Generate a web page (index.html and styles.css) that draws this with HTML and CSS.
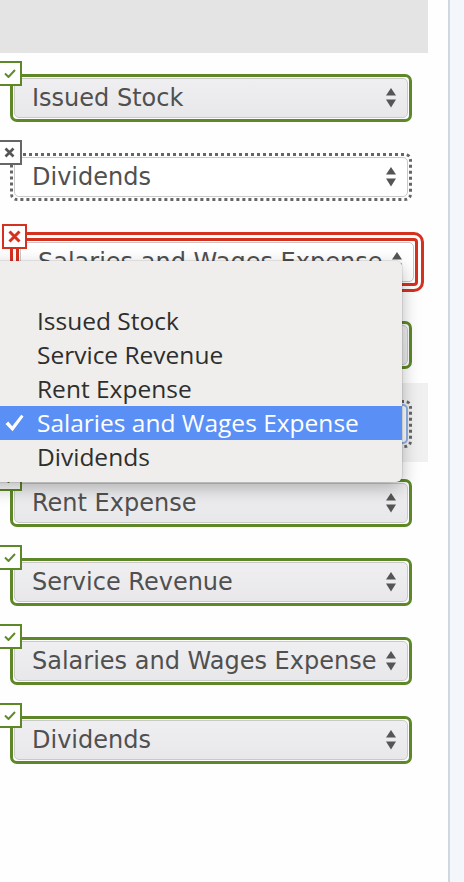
FILE: index.html
```html
<!DOCTYPE html>
<html lang="en">
<head>
<meta charset="utf-8">
<title>Account classification</title>
<link rel="stylesheet" href="styles.css">
</head>
<body>
<div class="app">
  <main class="main">
    <div class="header"></div>
    <div class="rows">
      <div class="row">
        <div class="field ok">
          <span class="badge ok"><svg width="12" height="9" viewBox="0 0 12 9"><path d="M1 4.5 L4.5 8 L11 1" fill="none" stroke="#608a2b" stroke-width="2"/></svg></span>
          <div class="select"><span class="val">Issued Stock</span><svg class="arrows" width="10" height="20" viewBox="0 0 10 20"><polygon points="0,7.5 5,0 10,7.5"/><polygon points="0,11.5 10,11.5 5,19.5"/></svg></div>
        </div>
      </div>
      <div class="row">
        <div class="field muted">
          <span class="badge muted"><svg width="11" height="11" viewBox="0 0 11 11"><path d="M1.5 1.5 L9.5 9.5 M9.5 1.5 L1.5 9.5" fill="none" stroke="#555" stroke-width="2.6"/></svg></span>
          <div class="select"><span class="val">Dividends</span><svg class="arrows" width="10" height="20" viewBox="0 0 10 20"><polygon points="0,7.5 5,0 10,7.5"/><polygon points="0,11.5 10,11.5 5,19.5"/></svg></div>
        </div>
      </div>
      <div class="row">
        <div class="field bad">
          <span class="badge bad"><svg width="13" height="13" viewBox="0 0 13 13"><path d="M1.5 1.5 L11.5 11.5 M11.5 1.5 L1.5 11.5" fill="none" stroke="#d6301f" stroke-width="3"/></svg></span>
          <div class="select"><span class="val">Salaries and Wages Expense</span><svg class="arrows" width="10" height="20" viewBox="0 0 10 20"><polygon points="0,7.5 5,0 10,7.5"/><polygon points="0,11.5 10,11.5 5,19.5"/></svg></div>
        </div>
      </div>
      <div class="row">
        <div class="field ok">
          <span class="badge ok"><svg width="12" height="9" viewBox="0 0 12 9"><path d="M1 4.5 L4.5 8 L11 1" fill="none" stroke="#608a2b" stroke-width="2"/></svg></span>
          <div class="select"><span class="val"></span><svg class="arrows" width="10" height="20" viewBox="0 0 10 20"><polygon points="0,7.5 5,0 10,7.5"/><polygon points="0,11.5 10,11.5 5,19.5"/></svg></div>
        </div>
      </div>
      <div class="row hover">
        <div class="field muted">
          <span class="badge muted"><svg width="11" height="11" viewBox="0 0 11 11"><path d="M1.5 1.5 L9.5 9.5 M9.5 1.5 L1.5 9.5" fill="none" stroke="#555" stroke-width="2.6"/></svg></span>
          <div class="select focus"><span class="val"></span><svg class="arrows" width="10" height="20" viewBox="0 0 10 20"><polygon points="0,7.5 5,0 10,7.5"/><polygon points="0,11.5 10,11.5 5,19.5"/></svg></div>
        </div>
      </div>
      <div class="row">
        <div class="field ok">
          <span class="badge ok"><svg width="12" height="9" viewBox="0 0 12 9"><path d="M1 4.5 L4.5 8 L11 1" fill="none" stroke="#608a2b" stroke-width="2"/></svg></span>
          <div class="select"><span class="val">Rent Expense</span><svg class="arrows" width="10" height="20" viewBox="0 0 10 20"><polygon points="0,7.5 5,0 10,7.5"/><polygon points="0,11.5 10,11.5 5,19.5"/></svg></div>
        </div>
      </div>
      <div class="row">
        <div class="field ok">
          <span class="badge ok"><svg width="12" height="9" viewBox="0 0 12 9"><path d="M1 4.5 L4.5 8 L11 1" fill="none" stroke="#608a2b" stroke-width="2"/></svg></span>
          <div class="select"><span class="val">Service Revenue</span><svg class="arrows" width="10" height="20" viewBox="0 0 10 20"><polygon points="0,7.5 5,0 10,7.5"/><polygon points="0,11.5 10,11.5 5,19.5"/></svg></div>
        </div>
      </div>
      <div class="row">
        <div class="field ok">
          <span class="badge ok"><svg width="12" height="9" viewBox="0 0 12 9"><path d="M1 4.5 L4.5 8 L11 1" fill="none" stroke="#608a2b" stroke-width="2"/></svg></span>
          <div class="select"><span class="val">Salaries and Wages Expense</span><svg class="arrows" width="10" height="20" viewBox="0 0 10 20"><polygon points="0,7.5 5,0 10,7.5"/><polygon points="0,11.5 10,11.5 5,19.5"/></svg></div>
        </div>
      </div>
      <div class="row">
        <div class="field ok">
          <span class="badge ok"><svg width="12" height="9" viewBox="0 0 12 9"><path d="M1 4.5 L4.5 8 L11 1" fill="none" stroke="#608a2b" stroke-width="2"/></svg></span>
          <div class="select"><span class="val">Dividends</span><svg class="arrows" width="10" height="20" viewBox="0 0 10 20"><polygon points="0,7.5 5,0 10,7.5"/><polygon points="0,11.5 10,11.5 5,19.5"/></svg></div>
        </div>
      </div>
    </div>

    <div class="menu">
      <div class="item"><span class="tick"></span><span></span></div>
      <div class="item"><span class="tick"></span><span class="label">Issued Stock</span></div>
      <div class="item"><span class="tick"></span><span class="label">Service Revenue</span></div>
      <div class="item"><span class="tick"></span><span class="label">Rent Expense</span></div>
      <div class="item sel"><span class="tick"><svg width="19" height="18" viewBox="0 0 19 18"><path d="M0.5 10 L3.2 7.6 L7.2 12.2 L16.2 0.8 L18.6 2.6 L7.6 17.2 Z" fill="#fff"/></svg></span><span class="label">Salaries and Wages Expense</span></div>
      <div class="item"><span class="tick"></span><span class="label">Dividends</span></div>
    </div>
  </main>
  <div class="divider"></div>
  <aside class="side"></aside>
</div>
</body>
</html>
```

FILE: styles.css
```css
html, body {
  margin: 0;
  padding: 0;
  background: #fefefe;
}

body {
  font-family: "DejaVu Sans", Verdana, sans-serif;
}

.app {
  display: flex;
  height: 882px;
  overflow: hidden;
}

.main {
  position: relative;
  width: 448px;
  flex: none;
  background: #fefefe;
}

.header {
  width: 428px;
  height: 53px;
  background: #e4e4e4;
}

.rows {
  width: 428px;
  padding-top: 4px;
}

.row {
  padding: 17px 0 14px 10px;
}

.row.hover {
  background: #f0f0f0;
}

.field {
  position: relative;
  display: flex;
  width: max-content;
  padding: 1px;
  border-radius: 7px;
}

.field.ok {
  border: 3px solid #5e8828;
}

.field.muted {
  border: 3px dotted #666;
}

.field.bad {
  border: 9px double #d6301f;
  border-radius: 10px;
  margin-bottom: -2px;
}

.badge {
  position: absolute;
  top: -16px;
  left: -16px;
  width: 21px;
  height: 21px;
  border: 2px solid;
  background: #fff;
  display: flex;
  align-items: center;
  justify-content: center;
  z-index: 1;
}

.field.bad .badge {
  top: -17px;
  left: -17px;
}

.badge.ok {
  border-color: #5e8828;
}

.badge.muted {
  border-color: #666;
}

.badge.bad {
  border-color: #d6301f;
}

.select {
  box-sizing: border-box;
  width: 394px;
  height: 40px;
  display: flex;
  align-items: center;
  padding: 0 11px 0 17px;
  border: 1px solid #c9c9c9;
  border-radius: 5px;
  background: #fff;
  font-size: 24px;
  line-height: 28px;
  color: #505050;
}

.field.ok .select {
  background: linear-gradient(#efeff1, #e8e8ea);
}

.select.focus {
  border: 2px solid #8db2ea;
}

.select .val {
  flex: 1;
  white-space: nowrap;
  overflow: hidden;
}

.arrows {
  flex: none;
  fill: #555;
}

.menu {
  position: absolute;
  left: -30px;
  top: 261px;
  width: 432px;
  box-sizing: border-box;
  padding: 9px 0 8px;
  background: #efeeec;
  border-radius: 6px;
  box-shadow: 0 0 0 1px rgba(0, 0, 0, 0.08), 0 6px 18px rgba(0, 0, 0, 0.28);
  font-family: "Open Sans", "Noto Sans", sans-serif;
  font-size: 24.5px;
  line-height: 28px;
  color: #2e2e2e;
  z-index: 5;
}

.item {
  height: 34px;
  display: flex;
  align-items: center;
  padding-left: 33px;
  white-space: nowrap;
}

.item.sel {
  background: #5a8ff6;
  color: #fff;
}

.tick {
  flex: none;
  width: 34px;
  box-sizing: border-box;
  padding-left: 2px;
  display: flex;
  align-items: center;
}

.divider {
  width: 2px;
  flex: none;
  background: #d0d7e1;
}

.side {
  flex: 1;
  background: #f3f6fa;
}
```
